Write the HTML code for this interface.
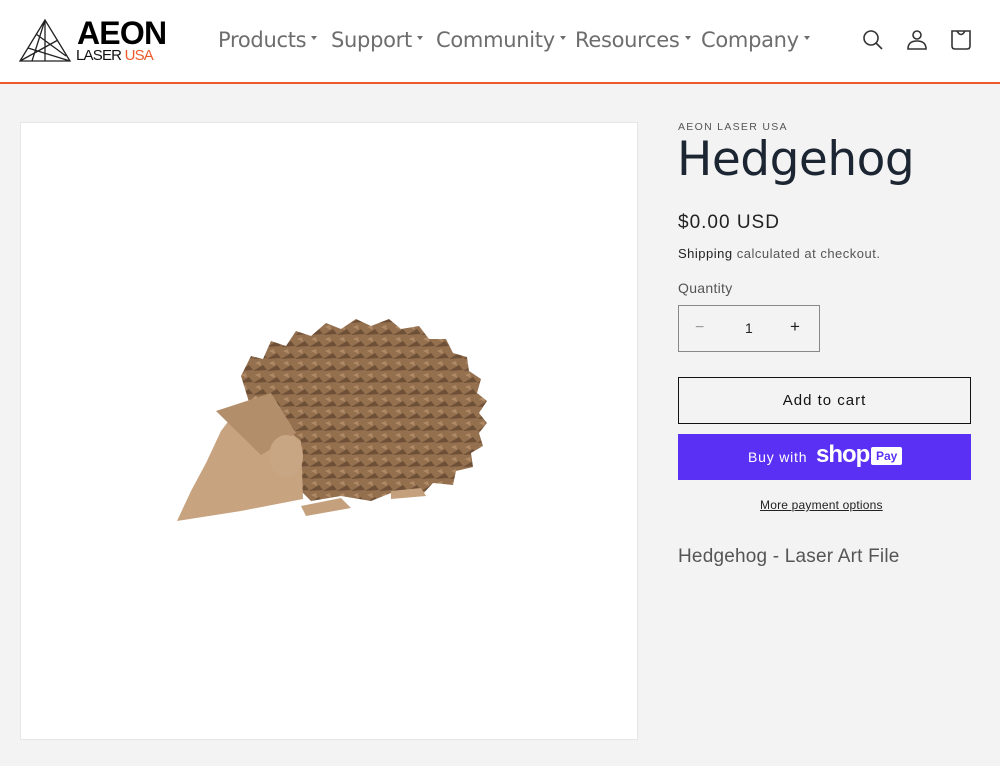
<!DOCTYPE html>
<html><head><meta charset="utf-8"><style>
*{margin:0;padding:0;box-sizing:border-box}
body{width:1000px;height:766px;background:#f3f3f3;font-family:"Liberation Sans",sans-serif;position:relative;overflow:hidden;color:#121212}
.hdr{position:absolute;left:0;top:0;width:1000px;height:84px;background:#fff;border-bottom:2px solid #ec5a2c}
.nav{position:absolute;top:28px;font-size:21px;color:#6d6d6d;font-family:"DejaVu Sans","Liberation Sans",sans-serif;letter-spacing:-0.3px}
.nav span{position:absolute;white-space:nowrap}
.car{display:inline-block;border-left:3px solid transparent;border-right:3px solid transparent;border-top:4px solid #6d6d6d;vertical-align:middle;margin-left:5px;position:relative;top:-3px}
.img{position:absolute;left:20px;top:122px;width:618px;height:618px;background:#fff;border:1px solid #e6e6e6}
.t{position:absolute;white-space:nowrap}
</style></head><body>
<div class="hdr">
 <svg style="position:absolute;left:18px;top:18px" width="54" height="45" viewBox="0 0 54 45" fill="none" stroke="#222" stroke-width="1.3">
  <path d="M27 2 L2 43 L52 43 Z M27 2 L27 43 M27 2 L14 43 M10 30 L52 43 M2 43 L40 22 M18 16 L48 38"/>
 </svg>
 <div class="t" style="left:77px;top:15px;font-size:32px;font-weight:bold;letter-spacing:-0.8px;color:#000">AEON</div>
 <div class="t" style="left:76px;top:47px;font-size:15px;color:#111;letter-spacing:-0.8px">LASER <span style="color:#ec5a2c">USA</span></div>
 <div class="nav">
  <span style="left:218px">Products<i class="car"></i></span>
  <span style="left:331px">Support<i class="car"></i></span>
  <span style="left:436px">Community<i class="car"></i></span>
  <span style="left:575px">Resources<i class="car"></i></span>
  <span style="left:701px">Company<i class="car"></i></span>
 </div>
 <svg style="position:absolute;left:862px;top:29px" width="22" height="22" viewBox="0 0 22 22" fill="none" stroke="#333" stroke-width="1.6"><circle cx="9" cy="9" r="7"/><path d="M14 14 L20 20"/></svg>
 <svg style="position:absolute;left:906px;top:29px" width="22" height="22" viewBox="0 0 22 22" fill="none" stroke="#333" stroke-width="1.6"><circle cx="11" cy="6" r="4"/><path d="M2 20 Q2 12 11 12 Q20 12 20 20 Z"/></svg>
 <svg style="position:absolute;left:950px;top:29px" width="22" height="22" viewBox="0 0 22 22" fill="none" stroke="#333" stroke-width="1.6"><path d="M2 2 H20 V17 Q20 20 17 20 H5 Q2 20 2 17 Z M7 2 Q11 9 15 2"/></svg>
</div>
<div class="img">
 <svg width="618" height="618" viewBox="20 122 618 618">
  <defs>
   <pattern id="sp" width="14" height="12" patternUnits="userSpaceOnUse">
    <rect width="14" height="12" fill="#94704f"/>
    <path d="M0 10 L10 4 L14 9 Z" fill="#6e5037"/>
    <path d="M2 2 L7 0 L8 5 Z" fill="#b08a66"/>
   </pattern>
  </defs>
  <path d="M240 375 L250 355 L262 358 L270 340 L285 345 L295 330 L310 335 L325 322 L340 328 L355 318 L370 325 L388 318 L400 328 L418 325 L428 338 L445 338 L452 352 L466 356 L468 370 L480 378 L476 392 L486 400 L478 412 L486 422 L478 432 L482 445 L470 452 L472 466 L455 470 L452 484 L432 482 L420 495 L395 490 L370 500 L340 495 L310 500 L290 480 L260 440 Z" fill="url(#sp)"/>
  <path d="M176 520 L190 490 L205 462 L220 430 L235 410 L255 395 L275 420 L300 440 L302 498 L240 510 Z" fill="#c8a380"/>
  <path d="M215 410 l55 -18 l25 40 l-35 22 z" fill="#b38e6b"/>
  <ellipse cx="285" cy="455" rx="17" ry="21" fill="#c9a683"/>
  <path d="M300 505 l40 -8 l10 10 l-45 8 z M390 490 l30 -3 l5 8 l-35 3z" fill="#c4a07d"/>
 </svg>
</div>
<div class="t" style="left:678px;top:121px;font-size:10.5px;letter-spacing:1.3px;color:#555">AEON LASER USA</div>
<div class="t" style="left:677px;top:132px;font-size:47px;color:#1c2633;font-family:'DejaVu Sans',sans-serif;letter-spacing:-0.5px">Hedgehog</div>
<div class="t" style="left:678px;top:212px;font-size:19px;letter-spacing:1px;color:#222">$0.00 USD</div>
<div class="t" style="left:678px;top:246px;font-size:13px;letter-spacing:0.5px;color:#555"><span style="color:#222">Shipping</span> calculated at checkout.</div>
<div class="t" style="left:678px;top:280px;font-size:14px;letter-spacing:0.3px;color:#555">Quantity</div>
<div style="position:absolute;left:678px;top:305px;width:142px;height:47px;border:1px solid #888">
 <div class="t" style="left:16px;top:13px;font-size:16px;color:#999">−</div>
 <div class="t" style="left:66px;top:14px;font-size:14px;color:#222">1</div>
 <div class="t" style="left:111px;top:11px;font-size:17px;color:#222">+</div>
</div>
<div style="position:absolute;left:678px;top:377px;width:293px;height:47px;border:1.5px solid #111;text-align:center;line-height:45px;font-size:15px;letter-spacing:1px">Add to cart</div>
<div style="position:absolute;left:678px;top:434px;width:293px;height:46px;background:#5a31f4;color:#fff;font-size:14px;letter-spacing:0.8px">
 <span class="t" style="left:70px;top:15px">Buy with</span>
 <span class="t" style="left:138px;top:7px;font-size:24px;font-weight:bold;letter-spacing:-1px">shop</span>
 <span class="t" style="left:193px;top:13px;background:#fff;color:#5a31f4;font-size:12px;font-weight:bold;padding:2px 5px;border-radius:2px;letter-spacing:0">Pay</span>
</div>
<div class="t" style="left:760px;top:498px;font-size:12px;color:#222;text-decoration:underline;letter-spacing:0.2px">More payment options</div>
<div class="t" style="left:678px;top:546px;font-size:19px;color:#555;letter-spacing:0.2px">Hedgehog - Laser Art File</div>
</body></html>
